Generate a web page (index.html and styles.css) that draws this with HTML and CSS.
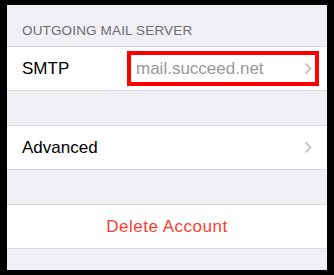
FILE: index.html
```html
<!DOCTYPE html>
<html>
<head>
<meta charset="utf-8">
<link rel="stylesheet" href="styles.css">
</head>
<body>
<div class="frame">
  <div class="screen">
    <div class="section-header">OUTGOING MAIL SERVER</div>
    <div class="row">
      <span class="label">SMTP</span>
      <span class="value">mail.succeed.net</span>
      <svg class="chevron" width="8" height="13" viewBox="0 0 8 13"><polyline points="1.5,1.5 6.5,6.5 1.5,11.5" fill="none" stroke="#c7c7cc" stroke-width="2"/></svg>
    </div>
    <div class="gap"></div>
    <div class="row">
      <span class="label">Advanced</span>
      <svg class="chevron push" width="8" height="13" viewBox="0 0 8 13"><polyline points="1.5,1.5 6.5,6.5 1.5,11.5" fill="none" stroke="#c7c7cc" stroke-width="2"/></svg>
    </div>
    <div class="gap"></div>
    <div class="row center">
      <span class="danger">Delete Account</span>
    </div>
    <div class="footer"></div>
    <div class="highlight"></div>
  </div>
</div>
</body>
</html>
```
FILE: styles.css
```css
html, body {
  margin: 0;
  padding: 0;
  background: #000;
}
.frame {
  width: 334px;
  height: 275px;
  padding: 5px 7px;
  box-sizing: border-box;
}
.screen {
  position: relative;
  width: 320px;
  height: 265px;
  background: #efeff4;
  font-family: "Liberation Sans", Arial, sans-serif;
  display: flex;
  flex-direction: column;
  overflow: hidden;
}
.section-header {
  height: 41px;
  box-sizing: border-box;
  padding: 0 0 8px 15px;
  display: flex;
  align-items: flex-end;
  font-size: 13.5px;
  letter-spacing: 0.15px;
  color: #6d6d72;
}
.row {
  height: 45px;
  box-sizing: border-box;
  background: #fff;
  border-top: 1px solid #d8d7dc;
  border-bottom: 1px solid #d8d7dc;
  display: flex;
  align-items: center;
  padding: 0 15px 0 15px;
  font-size: 17px;
  color: #000;
}
.label {
  width: 114px;
  flex: none;
}
.value {
  color: #999;
  flex: 1;
}
.chevron {
  flex: none;
  margin-right: 0;
}
.push {
  margin-left: auto;
}
.center {
  justify-content: center;
}
.danger {
  color: #ff3b30;
  letter-spacing: 0.5px;
}
.gap {
  height: 34px;
}
.footer {
  flex: 1;
}
.highlight {
  position: absolute;
  left: 120px;
  top: 46px;
  width: 192px;
  height: 35px;
  box-sizing: border-box;
  border: 4px solid #ff0000;
}
```
